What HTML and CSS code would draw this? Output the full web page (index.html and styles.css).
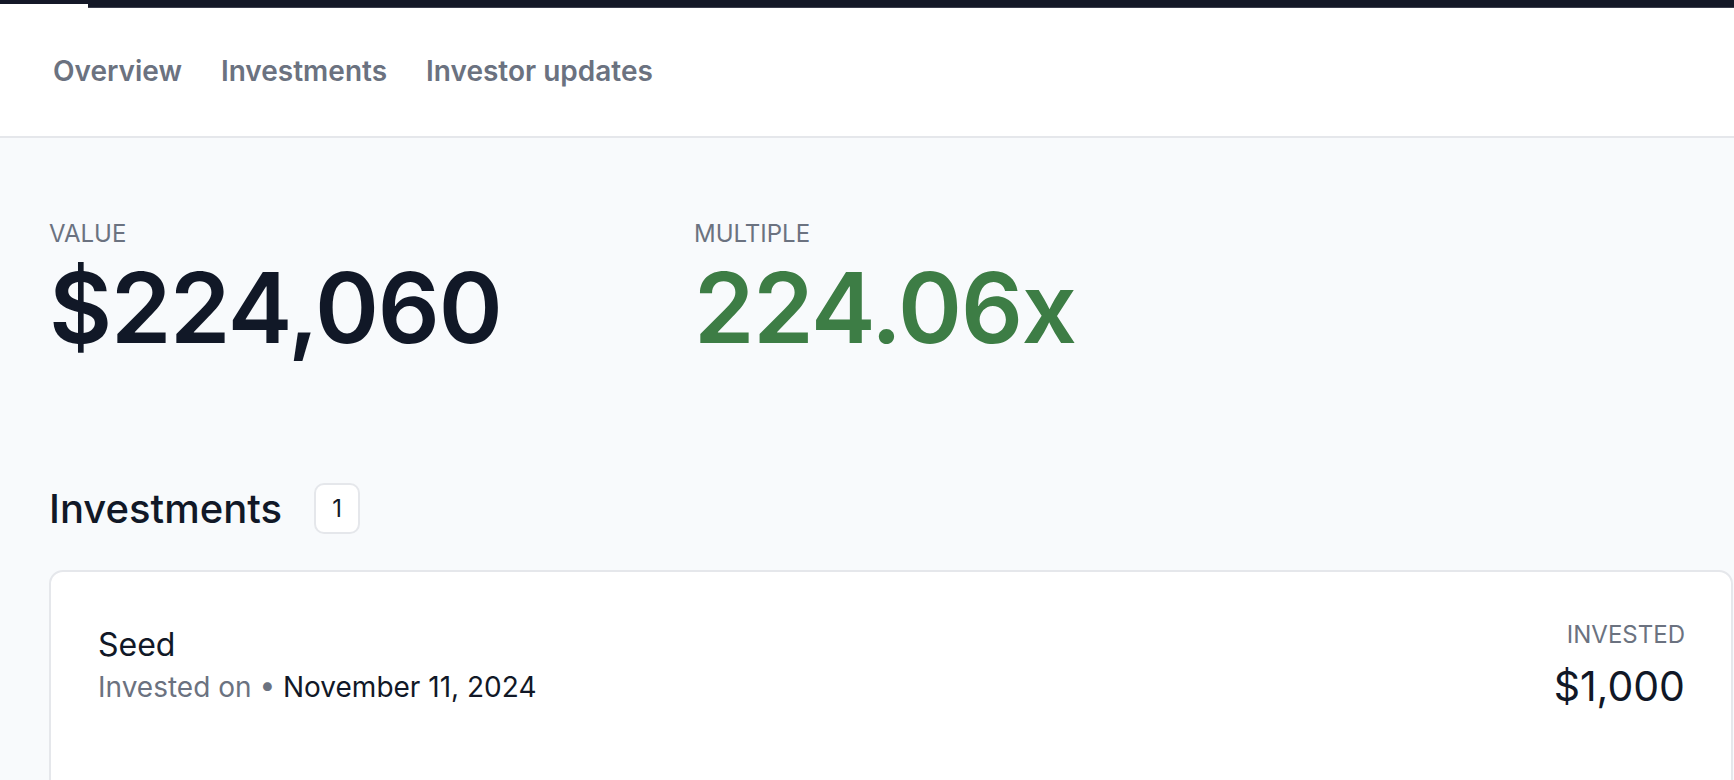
FILE: index.html
```html
<!DOCTYPE html>
<html lang="en">
<head>
<meta charset="utf-8">
<title>Investor portal</title>
<link rel="stylesheet" href="styles.css">
</head>
<body>
  <div class="topbar">
    <div class="topbar-left"></div>
    <div class="topbar-rest"></div>
  </div>
  <nav class="tabs">
    <a class="tab">Overview</a>
    <a class="tab">Investments</a>
    <a class="tab">Investor updates</a>
  </nav>
  <main class="main">
    <section class="stats">
      <div class="stat">
        <div class="stat-label">Value</div>
        <div class="stat-value">$224,060</div>
      </div>
      <div class="stat">
        <div class="stat-label">Multiple</div>
        <div class="stat-value stat-value-green">224.06x</div>
      </div>
    </section>
    <section class="investments">
      <div class="section-head">
        <h2 class="section-title">Investments</h2>
        <span class="count-badge">1</span>
      </div>
      <div class="card">
        <div class="card-row">
          <div class="card-left">
            <div class="round-name">Seed</div>
            <div class="round-meta"><span class="muted">Invested on</span> <span class="dot">•</span> <span class="date">November 11, 2024</span></div>
          </div>
          <div class="card-right">
            <div class="amount-label">Invested</div>
            <div class="amount">$1,000</div>
          </div>
        </div>
      </div>
    </section>
  </main>
</body>
</html>
```
FILE: styles.css
```css
* { box-sizing: border-box; }
html, body { margin: 0; padding: 0; }
body {
  font-family: Inter, "Noto Sans", "Liberation Sans", sans-serif;
  color: #111827;
  background: #f8fafc;
  height: 780px;
  overflow: hidden;
}
.topbar {
  display: flex;
  align-items: flex-start;
  background: #ffffff;
  height: 8px;
}
.topbar-left {
  width: 88px;
  height: 4px;
  background: #141827;
}
.topbar-rest {
  flex: 1;
  height: 8px;
  background: #141827;
  border-bottom: 1px solid #3b3e4d;
}
.tabs {
  display: flex;
  align-items: center;
  gap: 39px;
  height: 130px;
  padding-left: 53px;
  padding-bottom: 2px;
  background: #ffffff;
  border-bottom: 2px solid #e5e7eb;
}
.tab {
  font-size: 28px;
  font-weight: 600;
  color: #6b7280;
  line-height: 36px;
}
.main {
  padding: 80px 1px 0 49px;
}
.stats {
  display: flex;
}
.stat {
  width: 645px;
}
.stat-label {
  font-size: 24px;
  line-height: 32px;
  color: #6b7280;
  text-transform: uppercase;
}
.stat-value {
  margin-top: 9px;
  font-size: 97px;
  line-height: 98px;
  font-weight: 600;
  color: #111827;
  letter-spacing: -1.2px;
}
.stat-value-green {
  color: #3d7d45;
}
.investments {
  margin-top: 126px;
}
.section-head {
  display: flex;
  align-items: center;
  gap: 32px;
  height: 51px;
}
.section-title {
  margin: 0;
  font-size: 40px;
  line-height: 51px;
  font-weight: 500;
  color: #111827;
}
.count-badge {
  display: flex;
  align-items: center;
  justify-content: center;
  width: 46px;
  height: 51px;
  border: 2px solid #e5e7eb;
  border-radius: 10px;
  background: #ffffff;
  font-size: 24px;
  color: #111827;
}
.card {
  margin-top: 36px;
  background: #ffffff;
  border: 2px solid #e5e7eb;
  border-radius: 14px;
  padding: 45px 46px 120px 47px;
}
.card-row {
  display: flex;
  justify-content: space-between;
  align-items: flex-start;
}
.card-left {
  margin-top: 6px;
}
.round-name {
  font-size: 32px;
  line-height: 44px;
  color: #111827;
}
.round-meta {
  font-size: 28px;
  line-height: 40px;
}
.muted, .dot { color: #6b7280; }
.date { color: #111827; }
.card-right {
  text-align: right;
  margin-top: 1px;
}
.amount-label {
  font-size: 24px;
  line-height: 34px;
  color: #6b7280;
  text-transform: uppercase;
}
.amount {
  margin-top: 8px;
  font-size: 41px;
  line-height: 52px;
  color: #111827;
}
```
